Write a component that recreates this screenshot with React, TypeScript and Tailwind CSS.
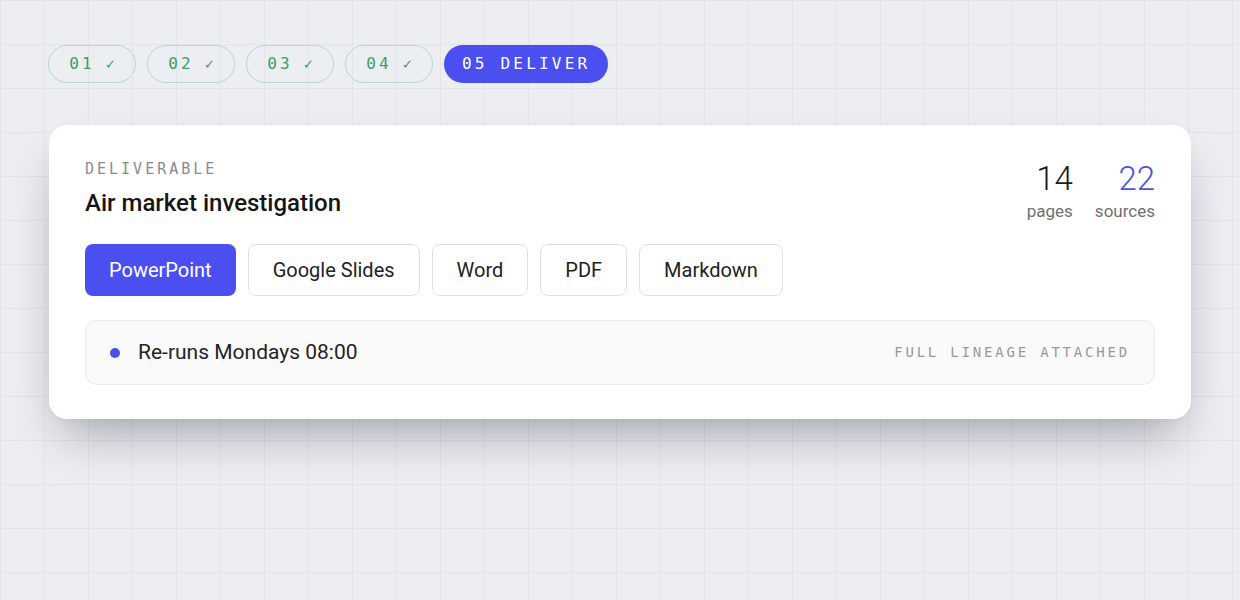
import { useState } from "react";

const steps = ["01", "02", "03", "04"];
const formats = ["PowerPoint", "Google Slides", "Word", "PDF", "Markdown"];

const mono = "font-['DejaVu_Sans_Mono','Liberation_Mono',monospace]";
const sans = "font-['Roboto','Liberation_Sans',sans-serif]";

function StepPills() {
  return (
    <div className={`flex items-center gap-[11px] ${mono}`}>
      {steps.map((s) => (
        <div
          key={s}
          className="flex h-[38px] w-[88px] items-center justify-center rounded-full border border-[#b3dac4] text-[16px] tracking-[0.2em] text-[#3b9e66]"
        >
          {s}
          <span className="ml-[11px] text-[15px] tracking-normal">✓</span>
        </div>
      ))}
      <div className="flex h-[38px] items-center rounded-full bg-[#4b4ff0] px-[18px] text-[16px] tracking-[0.2em] text-white">
        05 DELIVER
      </div>
    </div>
  );
}

function Stat({ value, label, accent }: { value: string; label: string; accent?: boolean }) {
  return (
    <div className="flex flex-col items-end">
      <span className={`text-[33px] leading-[38px] font-light ${accent ? "text-[#4f53df]" : "text-[#1c1c1e]"}`}>{value}</span>
      <span className="mt-[3px] text-[17px] leading-[20px] text-[#707074]">{label}</span>
    </div>
  );
}

export default function App() {
  const [active, setActive] = useState("PowerPoint");

  return (
    <div
      className={`h-[600px] w-[1240px] overflow-hidden bg-[#eceef2] bg-[linear-gradient(to_right,#e2e4e9_1px,transparent_1px),linear-gradient(to_bottom,#e2e4e9_1px,transparent_1px)] bg-[size:44px_44px] px-12 pt-[45px] ${sans}`}
    >
      <StepPills />

      <div className="mt-[42px] ml-px w-[1142px] rounded-[18px] bg-white px-9 pt-[35px] pb-[34px] shadow-[0_26px_50px_-14px_rgba(15,15,35,0.34),0_2px_6px_rgba(0,0,0,0.03)]">
        <div className="flex items-start justify-between">
          <div>
            <div className={`text-[15px] leading-[18px] tracking-[0.2em] text-[#8a8a8e] ${mono}`}>DELIVERABLE</div>
            <h1 className="mt-[10px] text-[24px] leading-[30px] font-medium text-[#151517]">Air market investigation</h1>
          </div>
          <div className="flex gap-[22px]">
            <Stat value="14" label="pages" />
            <Stat value="22" label="sources" accent />
          </div>
        </div>

        <div className="mt-[23px] flex gap-3">
          {formats.map((f) => (
            <button
              key={f}
              onClick={() => setActive(f)}
              className={`h-[52px] rounded-lg px-6 text-[20px] ${
                active === f ? "bg-[#4b4ff0] text-white" : "border border-[#e1e1e5] bg-white text-[#222224]"
              }`}
            >
              {f}
            </button>
          ))}
        </div>

        <div className="mt-6 flex h-[65px] items-center justify-between rounded-xl border border-[#e9e9ec] bg-[#fafafa] px-6">
          <div className="flex items-center gap-[18px]">
            <span className="h-[10px] w-[10px] rounded-full bg-[#4b4ff0]" />
            <span className="text-[21px] text-[#232325]">Re-runs Mondays 08:00</span>
          </div>
          <span className={`text-[14px] tracking-[0.2em] text-[#98989c] ${mono}`}>FULL LINEAGE ATTACHED</span>
        </div>
      </div>
    </div>
  );
}
